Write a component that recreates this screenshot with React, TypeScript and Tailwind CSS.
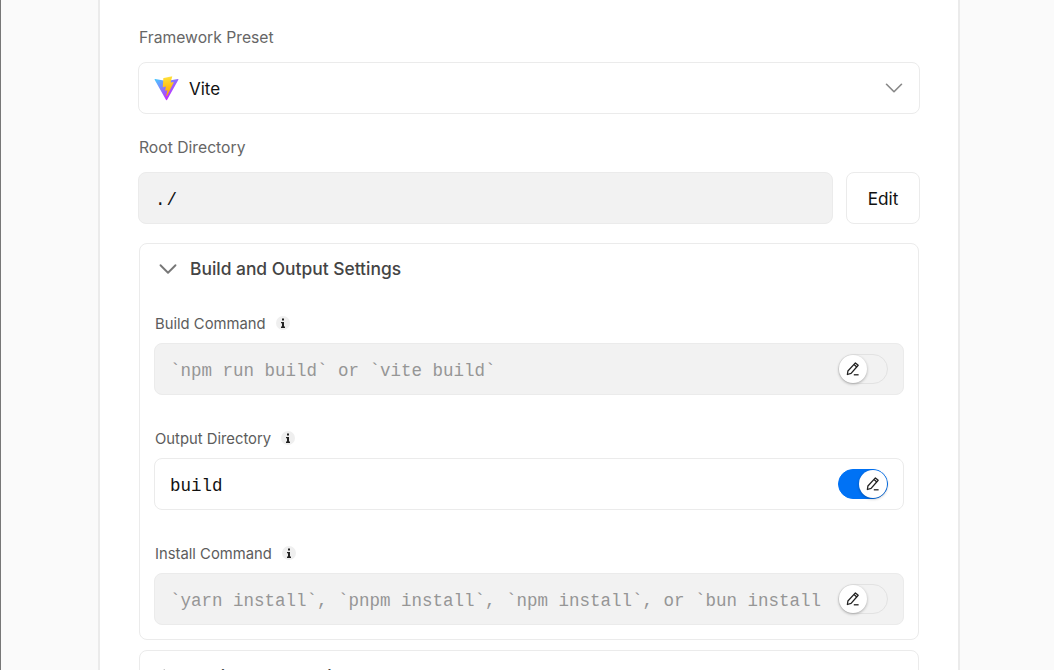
import { ChevronDown } from "lucide-react";

const sans = "font-['Inter','Noto_Sans',sans-serif]";
const mono = "font-['Liberation_Mono',monospace]";

function ViteLogo() {
  return (
    <svg width="25" height="25" viewBox="0 0 410 404" fill="none">
      <path
        d="M399.641 59.5246L215.643 388.545C211.844 395.338 202.084 395.378 198.228 388.618L10.5817 59.5563C6.38087 52.1896 12.6802 43.2665 21.0281 44.7586L205.223 77.6824C206.398 77.8924 207.601 77.8904 208.776 77.6763L389.119 44.8058C397.439 43.2894 403.768 52.1434 399.641 59.5246Z"
        fill="url(#viteA)"
      />
      <path
        d="M292.965 1.5744L156.801 28.2552C154.563 28.6937 152.906 30.5903 152.771 32.8664L144.395 174.33C144.198 177.662 147.258 180.248 150.51 179.498L188.42 170.749C191.967 169.931 195.172 173.055 194.443 176.622L183.18 231.775C182.422 235.487 185.907 238.661 189.532 237.56L212.947 230.446C216.577 229.344 220.065 232.527 219.297 236.242L201.398 322.875C200.278 328.294 207.486 331.249 210.492 326.603L212.5 323.5L323.454 102.072C325.312 98.3645 322.108 94.137 318.036 94.9228L279.014 102.454C275.347 103.161 272.227 99.746 273.262 96.1583L298.731 7.86689C299.767 4.27314 296.636 0.855181 292.965 1.5744Z"
        fill="url(#viteB)"
      />
      <defs>
        <linearGradient id="viteA" x1="6" y1="33" x2="235" y2="344" gradientUnits="userSpaceOnUse">
          <stop stopColor="#41D1FF" />
          <stop offset="1" stopColor="#BD34FE" />
        </linearGradient>
        <linearGradient id="viteB" x1="194.65" y1="8.82" x2="236.08" y2="292.99" gradientUnits="userSpaceOnUse">
          <stop stopColor="#FFEA83" />
          <stop offset="0.0833" stopColor="#FFDD35" />
          <stop offset="1" stopColor="#FFA800" />
        </linearGradient>
      </defs>
    </svg>
  );
}

function Pencil() {
  return (
    <svg width="16" height="16" viewBox="0 0 16 16" fill="none" stroke="#222" strokeWidth="1.3" strokeLinejoin="round">
      <path d="M10.4 1.9l2.8 2.3-7.1 8.2-3.7 1.1.5-3.5z" />
      <path d="M9 3.5l2.8 2.4" />
      <path d="M8.8 13.8h4.8" />
    </svg>
  );
}

function InfoDot() {
  return (
    <span className="flex h-[14px] w-[14px] items-center justify-center rounded-full bg-[#efefef]">
      <svg width="6" height="10" viewBox="0 0 6 10" fill="#222">
        <rect x="2" y="0.5" width="2" height="2" />
        <path d="M1 4h3v4.5h1V10H1V8.5h1V5.3H1z" />
      </svg>
    </span>
  );
}

function Field({ label, value, on }: { label: string; value: string; on?: boolean }) {
  return (
    <div className="flex flex-col">
      <div className="flex h-[20px] items-center gap-[10px] pl-px">
        <span className="pt-[2px] text-[14.8px] text-[#5c5c5c]">{label}</span>
        <InfoDot />
      </div>
      <div
        className={`mt-[10px] flex h-[52px] items-center justify-between rounded-[8px] border border-[#ebebeb] pl-[15px] pr-[15px] ${
          on ? "bg-white" : "bg-[#f2f2f2]"
        }`}
      >
        <span
          className={`min-w-0 overflow-hidden whitespace-nowrap pt-[4px] text-[17.5px] ${mono} ${
            on ? "text-[#111]" : "text-[#969696]"
          }`}
        >
          {value}
        </span>
        <div
          className={`ml-[17px] flex h-[30px] w-[50px] shrink-0 rounded-full border ${
            on ? "justify-end border-[#0072f5] bg-[#0072f5]" : "justify-start border-[#e2e2e2] bg-transparent"
          }`}
        >
          <span className="flex h-[28px] w-[28px] items-center justify-center rounded-full bg-white shadow-[0_1px_3px_rgba(0,0,0,0.3)]">
            <Pencil />
          </span>
        </div>
      </div>
    </div>
  );
}

export default function App() {
  return (
    <div className={`flex h-[670px] overflow-hidden border-l border-[#777] bg-[#fafafa] ${sans}`}>
      <div className="ml-[97px] flex h-full w-[862px] flex-col overflow-hidden border-x-2 border-[#ebebeb] bg-white px-[38px] pt-[28px]">
        <div className="h-[20px] pl-px text-[15.7px] leading-[20px] text-[#666]">Framework Preset</div>
        <div className="mt-[14px] flex h-[52px] w-[782px] shrink-0 items-center justify-between rounded-[8px] border border-[#ebebeb] bg-white pl-[15px] pr-[10px]">
          <div className="flex items-center gap-[10px]">
            <ViteLogo />
            <span className="pt-[3px] text-[17px] text-[#111]">Vite</span>
          </div>
          <ChevronDown size={30} strokeWidth={1.3} className="-my-1 text-[#888]" />
        </div>
        <div className="mt-[24px] h-[20px] pl-px text-[15.7px] leading-[20px] text-[#666]">Root Directory</div>
        <div className="mt-[14px] flex w-[782px] shrink-0 gap-[13px]">
          <div className={`flex h-[52px] flex-1 items-center rounded-[8px] border border-[#ebebeb] bg-[#f2f2f2] pl-[16px] pt-[4px] text-[17.5px] tracking-[1px] text-[#111] ${mono}`}>
            ./
          </div>
          <button className="h-[52px] w-[74px] rounded-[8px] border border-[#ebebeb] bg-white pt-px text-[17.2px] text-[#111]">
            Edit
          </button>
        </div>
        <div className="mt-[19px] ml-px flex h-[397px] w-[780px] shrink-0 flex-col rounded-[8px] border border-[#ebebeb] px-[14px] pt-[11px]">
          <div className="flex h-[28px] items-center gap-[7px]">
            <ChevronDown size={30} strokeWidth={1.5} className="-my-1 -ml-px text-[#777]" />
            <span className="text-[17.4px] font-medium text-[#444]">Build and Output Settings</span>
          </div>
          <div className="mt-[30px] flex flex-col gap-[33px]">
            <Field label="Build Command" value="`npm run build` or `vite build`" />
            <Field label="Output Directory" value="build" on />
            <Field label="Install Command" value="`yarn install`, `pnpm install`, `npm install`, or `bun install`" />
          </div>
        </div>
        <div className="mt-[10px] ml-px flex h-[44px] w-[780px] shrink-0 items-start gap-[7px] rounded-[8px] border border-[#ebebeb] px-[14px] pt-[13px]">
          <ChevronDown size={30} strokeWidth={1.5} className="-ml-px -mt-[1px] -rotate-90 text-[#777]" />
          <span className="text-[17.4px] font-medium text-[#444]">Environment Variables</span>
        </div>
      </div>
    </div>
  );
}
